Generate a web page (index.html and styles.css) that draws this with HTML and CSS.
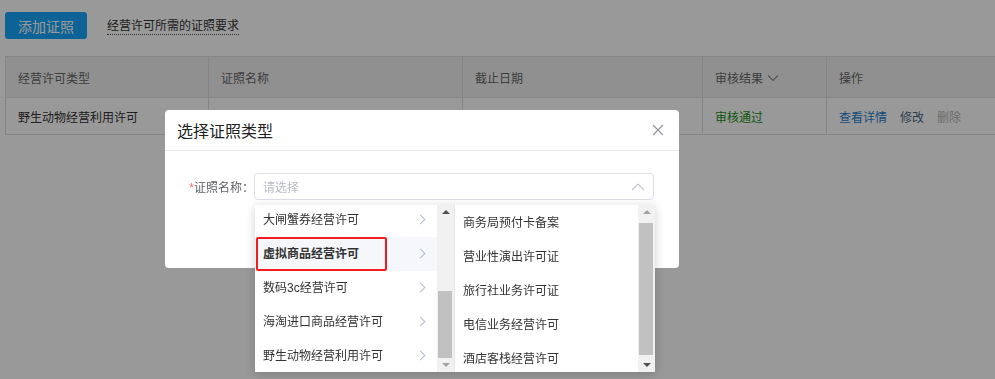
FILE: index.html
```html
<!DOCTYPE html>
<html lang="zh-CN">
<head>
  <meta charset="utf-8">
  <title>证照管理</title>
  <link rel="stylesheet" href="styles.css">
</head>
<body>
  <div class="page">
    <div class="toolbar">
      <button class="btn-add" type="button">添加证照</button>
      <span class="req-link">经营许可所需的证照要求</span>
    </div>
    <table class="grid">
      <colgroup>
        <col style="width: 203px">
        <col style="width: 254px">
        <col style="width: 240px">
        <col style="width: 124px">
        <col>
      </colgroup>
      <thead>
        <tr>
          <th>经营许可类型</th>
          <th>证照名称</th>
          <th>截止日期</th>
          <th>审核结果
            <svg class="th-caret" width="12" height="8" viewBox="0 0 12 8"><path d="M1 1.5 L6 6.5 L11 1.5" fill="none" stroke="#8c8c8c" stroke-width="1.1"/></svg>
          </th>
          <th>操作</th>
        </tr>
      </thead>
      <tbody>
        <tr>
          <td>野生动物经营利用许可</td>
          <td></td>
          <td></td>
          <td class="status-ok">审核通过</td>
          <td class="actions"><a class="act-view">查看详情</a><a class="act-edit">修改</a><a class="act-del">删除</a></td>
        </tr>
      </tbody>
    </table>
  </div>

  <div class="mask"></div>

  <div class="dialog">
    <div class="dialog__head">
      <span class="dialog__title">选择证照类型</span>
      <svg class="dialog__close" width="12" height="12" viewBox="0 0 12 12"><path d="M1 1 L11 11 M11 1 L1 11" stroke="#909399" stroke-width="1.1"/></svg>
    </div>
    <div class="dialog__body">
      <div class="form-row">
        <label class="form-label"><span class="req">*</span>证照名称：</label>
        <div class="select">
          <span class="select__placeholder">请选择</span>
          <svg class="select__arrow" width="14" height="8" viewBox="0 0 14 8"><path d="M1 7 L7 1 L13 7" fill="none" stroke="#c0c4cc" stroke-width="1.1"/></svg>
        </div>
      </div>
    </div>

    <div class="cascader">
      <div class="panel">
        <ul class="panel__list panel__list--left">
          <li class="option">大闸蟹券经营许可<i class="chev"></i></li>
          <li class="option option--active">虚拟商品经营许可<i class="chev"></i><span class="mark"></span></li>
          <li class="option">数码3c经营许可<i class="chev"></i></li>
          <li class="option">海淘进口商品经营许可<i class="chev"></i></li>
          <li class="option">野生动物经营利用许可<i class="chev"></i></li>
        </ul>
        <div class="sbar">
          <span class="sbar__up"></span>
          <div class="sbar__track"><div class="sbar__thumb sbar__thumb--left"></div></div>
          <span class="sbar__down sbar__btn--off"></span>
        </div>
      </div>
      <div class="panel panel--right">
        <ul class="panel__list panel__list--right">
          <li class="option">商务局预付卡备案</li>
          <li class="option">营业性演出许可证</li>
          <li class="option">旅行社业务许可证</li>
          <li class="option">电信业务经营许可</li>
          <li class="option">酒店客栈经营许可</li>
        </ul>
        <div class="sbar">
          <span class="sbar__up sbar__btn--off"></span>
          <div class="sbar__track"><div class="sbar__thumb sbar__thumb--right"></div></div>
          <span class="sbar__down"></span>
        </div>
      </div>
    </div>
  </div>
</body>
</html>
```

FILE: styles.css
```css
* {
  box-sizing: border-box;
}

body {
  margin: 0;
  background-color: #fff;
  font-family: "Liberation Sans", "Noto Sans CJK SC", sans-serif;
  font-size: 12px;
  color: #333;
  overflow: hidden;
  height: 379px;
}

.page {
  padding: 12px 0 0 5px;
}

.toolbar {
  display: flex;
  align-items: center;
  gap: 20px;
  height: 27px;
}

.btn-add {
  width: 82px;
  height: 27px;
  border: none;
  border-radius: 3px;
  background-color: #17a6f8;
  color: #fff;
  font-family: inherit;
  font-size: 14px;
  padding: 0;
}

.req-link {
  color: #333;
  line-height: 16px;
  border-bottom: 1px dotted #555;
  margin-top: 2px;
}

.grid {
  margin-top: 17px;
  width: 1010px;
  border-collapse: collapse;
  table-layout: fixed;
}

.grid th,
.grid td {
  border: 1px solid #dedede;
  padding: 0 12px;
  text-align: left;
  font-weight: normal;
  white-space: nowrap;
}

.grid th {
  height: 41px;
  background-color: #f1f1f1;
  color: #666;
}

.grid td {
  height: 37px;
  color: #333;
}

.th-caret {
  margin-left: 1px;
  vertical-align: 1px;
}

.status-ok {
  color: #1a8f16 !important;
}

.actions a {
  margin-right: 13px;
}

.act-view {
  color: #1d7fcf;
}

.act-edit {
  color: #4d6a84;
}

.act-del {
  color: #b4b4b4;
}

.mask {
  position: fixed;
  left: 0;
  top: 0;
  right: 0;
  bottom: 0;
  background-color: rgba(0, 0, 0, 0.4);
}

.dialog {
  position: absolute;
  left: 165px;
  top: 110px;
  width: 514px;
  height: 158px;
  background-color: #fff;
  border-radius: 4px;
}

.dialog__head {
  height: 41px;
  display: flex;
  align-items: center;
  justify-content: space-between;
  padding: 0 15px 0 12px;
  border-bottom: 1px solid #e9e9e9;
}

.dialog__title {
  font-size: 16px;
  color: #222;
  margin-top: -1px;
}

.dialog__close {
  margin-top: -1px;
}

.dialog__body {
  padding-top: 22px;
}

.form-row {
  display: flex;
  align-items: center;
}

.form-label {
  width: 89px;
  text-align: right;
  color: #606266;
  white-space: nowrap;
}

.req {
  color: #f56c6c;
}

.select {
  width: 400px;
  height: 27px;
  border: 1px solid #dcdfe6;
  border-radius: 4px;
  display: flex;
  align-items: center;
  justify-content: space-between;
  padding: 0 8px 0 8px;
}

.select__placeholder {
  color: #b8bcc4;
}

.cascader {
  position: absolute;
  left: 90px;
  top: 95px;
  width: 400px;
  height: 167px;
  display: flex;
  background-color: #fff;
  box-shadow: 0 2px 10px rgba(0, 0, 0, 0.18);
}

.panel {
  width: 199px;
  height: 100%;
  display: flex;
  overflow: hidden;
}

.panel--right {
  width: 201px;
  border-left: 1px solid #e4e7ed;
}

.panel__list {
  flex: 1;
  list-style: none;
  margin: 0;
  padding: 0;
}

.panel__list--left {
  margin-top: -2px;
}

.panel__list--right {
  margin-top: 1px;
}

.option {
  position: relative;
  height: 34px;
  line-height: 34px;
  padding-left: 8px;
  color: #333;
  white-space: nowrap;
}

.panel__list--right .option {
  padding-left: 8px;
}

.option--active {
  background-color: #f5f7fa;
  font-weight: bold;
}

.chev {
  position: absolute;
  right: 13px;
  top: 13px;
  width: 7px;
  height: 7px;
  border-top: 1px solid #b4bccc;
  border-right: 1px solid #b4bccc;
  transform: rotate(45deg);
}

.mark {
  position: absolute;
  left: 1px;
  top: 0;
  width: 131px;
  height: 34px;
  border: 2px solid #f41c1c;
  border-radius: 2px;
}

.sbar {
  width: 17px;
  height: 100%;
  background-color: #f1f1f1;
  display: flex;
  flex-direction: column;
  align-items: center;
}

.sbar__up,
.sbar__down {
  width: 0;
  height: 0;
  border-left: 4px solid transparent;
  border-right: 4px solid transparent;
  margin: 5px 0;
}

.sbar__up {
  border-bottom: 4px solid #505050;
}

.sbar__down {
  border-top: 4px solid #505050;
}

.sbar__up.sbar__btn--off {
  border-bottom-color: #a3a3a3;
}

.sbar__down.sbar__btn--off {
  border-top-color: #a3a3a3;
}

.sbar__track {
  flex: 1;
  width: 100%;
  position: relative;
  margin: 3px 0;
}

.sbar__thumb {
  position: absolute;
  left: 1px;
  right: 2px;
  background-color: #c1c1c1;
}

.sbar__thumb--left {
  top: 69px;
  height: 67px;
}

.sbar__thumb--right {
  top: 1px;
  height: 132px;
}
```
